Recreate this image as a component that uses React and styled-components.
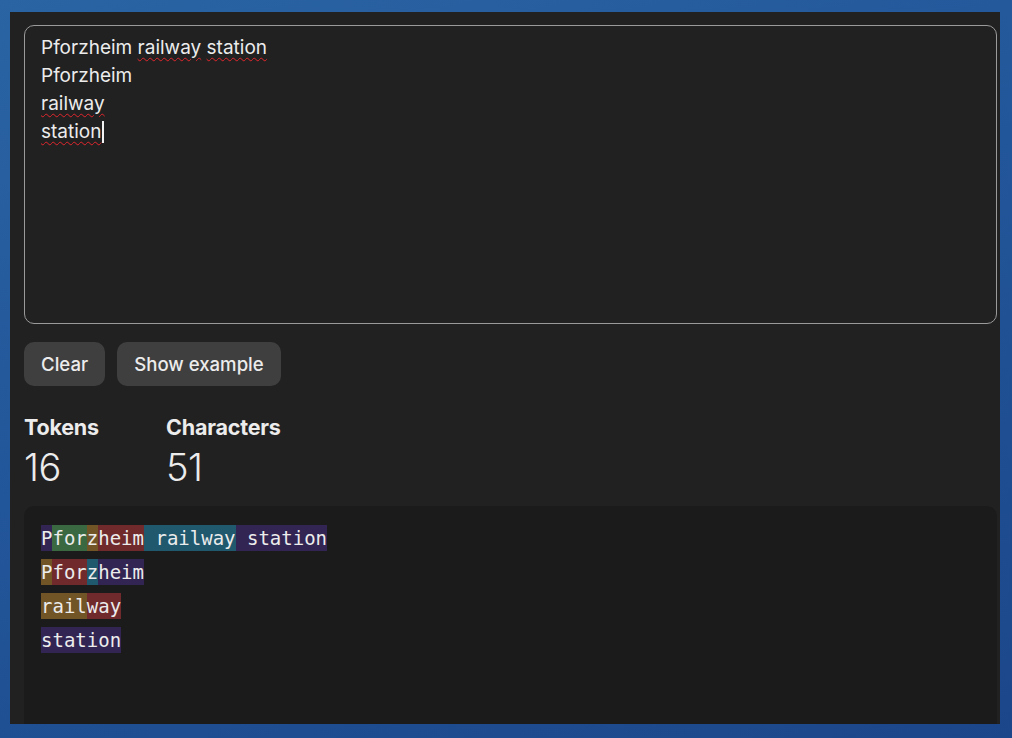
import React from 'react'
import styled, {createGlobalStyle} from 'styled-components'

const GlobalStyle = createGlobalStyle`
    html, body {
        margin: 0;
        padding: 0;
        height: 100%;
    }
    body {
        background: linear-gradient(160deg, #2a64a3 0%, #22569a 45%, #1c468a 100%);
        font-family: Inter, "Noto Sans", "Liberation Sans", sans-serif;
        overflow: hidden;
    }
`
const Page = styled.div`
    padding: 12px 12px 14px 10px;
    height: 738px;
    box-sizing: border-box;
`
const Panel = styled.div`
    background-color: #212121;
    height: 712px;
    overflow: hidden;
    padding: 13px 3px 0 14px;
    box-sizing: border-box;
    display: flex;
    flex-direction: column;
`
const Editor = styled.div`
    height: 299px;
    box-sizing: border-box;
    border: 1.5px solid #9a9a9a;
    border-radius: 10px;
    padding: 8px 16px;
    color: #ececec;
    font-size: 19px;
    line-height: 28px;
    letter-spacing: 0;
`
const Line = styled.div`
    white-space: pre;
`
const Misspelled = styled.span`
    text-decoration: underline wavy #e0262b;
    text-decoration-thickness: 1px;
    text-underline-offset: 3px;
`
const Caret = styled.span`
    display: inline-block;
    width: 1.5px;
    height: 22px;
    background: #f2f2f2;
    vertical-align: -5px;
    margin-left: 1px;
`
const Buttons = styled.div`
    display: flex;
    gap: 12px;
    margin-top: 18px;
`
const Button = styled.button`
    height: 44px;
    padding: 0 17px;
    border: none;
    border-radius: 10px;
    background-color: #3f3f3f;
    color: #ececec;
    font-family: inherit;
    font-size: 18.6px;
    font-weight: 500;
`
const Stats = styled.div`
    display: flex;
    margin-top: 29px;
`
const Stat = styled.div`
    width: ${p => p.$width || 'auto'};
    color: #ececec;
`
const StatLabel = styled.div`
    font-size: 21.5px;
    line-height: 24px;
    font-weight: 700;
    letter-spacing: -0.2px;
`
const StatValue = styled.div`
    font-size: 38px;
    line-height: 44px;
    font-weight: 300;
    margin-top: 6px;
    letter-spacing: -0.5px;
`
const Output = styled.div`
    margin-top: 17px;
    flex: 1;
    margin-bottom: -20px;
    background-color: #1b1b1b;
    border-radius: 10px;
    padding: 19px 17px;
    display: flex;
    flex-direction: column;
    gap: 8px;
    font-family: "DejaVu Sans Mono", "Liberation Mono", monospace;
    font-size: 19px;
    color: #ececec;
`
const TokenRow = styled.div`
    display: flex;
    height: 26px;
`
const Token = styled.span`
    display: inline-block;
    height: 26px;
    line-height: 26px;
    white-space: pre;
    background-color: ${p => p.$color};
`

const COLORS = [
    'rgba(107, 64, 216, 0.3)',
    'rgba(104, 222, 122, 0.4)',
    'rgba(244, 172, 54, 0.4)',
    'rgba(239, 65, 70, 0.4)',
    'rgba(39, 181, 234, 0.4)',
]

const TOKENS = ['P', 'for', 'z', 'heim', ' railway', ' station', '\n', 'P', 'for', 'z', 'heim', '\n', 'rail', 'way', '\n', 'station']

const rows = []
let current = []
TOKENS.forEach((t, i) => {
    if (t === '\n') {
        rows.push(current)
        current = []
    } else {
        current.push({text: t, color: COLORS[i % COLORS.length]})
    }
})
rows.push(current)

const App = () => {
    return (
        <Page>
            <GlobalStyle />
            <Panel>
                <Editor>
                    <Line>Pforzheim <Misspelled>railway</Misspelled> <Misspelled>station</Misspelled></Line>
                    <Line>Pforzheim</Line>
                    <Line><Misspelled>railway</Misspelled></Line>
                    <Line><Misspelled>station</Misspelled><Caret /></Line>
                </Editor>
                <Buttons>
                    <Button>Clear</Button>
                    <Button>Show example</Button>
                </Buttons>
                <Stats>
                    <Stat $width="142px">
                        <StatLabel>Tokens</StatLabel>
                        <StatValue>16</StatValue>
                    </Stat>
                    <Stat>
                        <StatLabel>Characters</StatLabel>
                        <StatValue>51</StatValue>
                    </Stat>
                </Stats>
                <Output>
                    {rows.map((row, r) => (
                        <TokenRow key={r}>
                            {row.map((tok, k) => (
                                <Token key={k} $color={tok.color}>{tok.text}</Token>
                            ))}
                        </TokenRow>
                    ))}
                </Output>
            </Panel>
        </Page>
    )
}

export default App
